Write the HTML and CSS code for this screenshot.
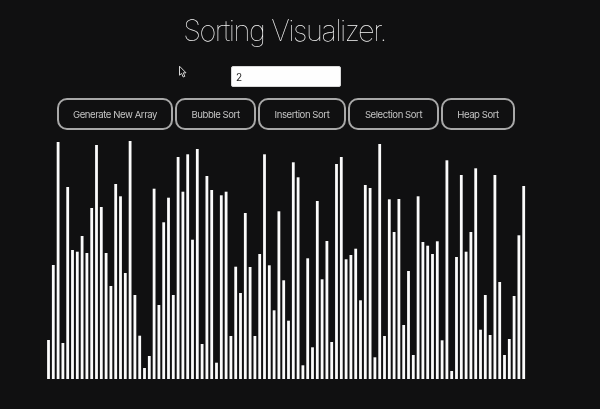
FILE: index.html
```html
<!DOCTYPE html>
<html lang="en">
<head>
<meta charset="utf-8">
<title>Sorting Visualizer</title>
<link rel="stylesheet" href="styles.css">
</head>
<body>
<header class="header">
  <h1 class="title">Sorting Visualizer.</h1>
  <input class="speed" type="text" value="2" aria-label="Speed">
</header>
<nav class="actions">
  <button class="btn btn-generate">Generate New Array</button>
  <button class="btn btn-bubble">Bubble Sort</button>
  <button class="btn btn-insertion">Insertion Sort</button>
  <button class="btn btn-selection">Selection Sort</button>
  <button class="btn btn-heap">Heap Sort</button>
</nav>
<svg class="chart" id="chart" width="480" height="240" viewBox="0 0 480 240"></svg>
<svg class="cursor" width="10" height="14" viewBox="0 0 10 14"><path d="M1.5 1.2V10.2L3.6 8.4L5.2 12L6.8 11.3L5.3 7.8H8Z"/></svg>
<script src="script.js"></script>
</body>
</html>
```
FILE: styles.css
```css
body {
  margin: 0;
  width: 600px;
  height: 409px;
  overflow: hidden;
  background: #101011;
  font-family: Inter, Roboto, "Liberation Sans", sans-serif;
}

.header {
  display: flex;
  flex-direction: column;
  align-items: center;
  width: 572px;
  padding-top: 13px;
  will-change: transform;
}

.title {
  margin: 0 3px 17px 0;
  font-size: 29px;
  line-height: 36px;
  font-weight: 100;
  letter-spacing: -1.45px;
  white-space: nowrap;
  color: #f4f4f4;
}

.speed {
  box-sizing: border-box;
  width: 110px;
  height: 21px;
  padding: 0 4px;
  border: 1px solid #d8d8d8;
  border-radius: 2px;
  background: #fefefe;
  color: #222;
  font: 10px Inter, sans-serif;
}

.actions {
  display: flex;
  gap: 2px;
  margin: 11px 0 0 57px;
  will-change: transform;
}

.btn {
  box-sizing: border-box;
  height: 32px;
  padding: 0;
  border: 2px solid #a8a8a8;
  border-radius: 10px;
  background: transparent;
  color: #c4c4c4;
  font: 9.6px Inter, sans-serif;
  letter-spacing: -0.45px;
  white-space: nowrap;
}

.btn-generate { width: 116px; }
.btn-bubble { width: 81px; }
.btn-insertion { width: 88px; }
.btn-selection { width: 91px; }
.btn-heap { width: 74px; }

.chart {
  display: block;
  margin: 9px 0 0 47px;
}

.bar { fill: #fbfbfb; }

.cursor {
  position: absolute;
  left: 178px;
  top: 65px;
  fill: #101011;
  stroke: #d5d5d5;
  stroke-width: 1;
}
```
FILE: script.js
```js
const values = [
  39, 114, 237, 36, 192, 129, 127.3, 143, 126, 171,
  234, 172, 126, 93, 195, 182.7, 106, 238, 84, 43.3,
  11, 23, 190.3, 74, 156.7, 181.3, 84, 222, 187.3, 224.7,
  139.3, 230, 35, 203, 189, 16.3, 183.7, 187.3, 43, 112.3,
  86, 166, 112, 43, 125, 224.7, 113.7, 68.7, 167.7, 98.7,
  58.3, 216.7, 201.7, 13.7, 120.7, 31.7, 178, 99.7, 138, 37,
  215, 222, 119.7, 124, 130.3, 78.7, 194, 191, 21.7, 235,
  43, 179.7, 147, 180, 54, 108, 24, 182.7, 137, 133.3,
  125, 137.7, 38.7, 218.7, 8, 122, 204, 127.3, 147, 210.7,
  49.3, 84, 44, 204, 97, 24, 40, 83, 143.7, 193
];
const chart = document.getElementById("chart");
values.forEach((value, i) => {
  const bar = document.createElementNS("http://www.w3.org/2000/svg", "rect");
  bar.setAttribute("class", "bar");
  bar.setAttribute("x", (0.1 + i * 4.8).toFixed(2));
  bar.setAttribute("y", 240 - value);
  bar.setAttribute("width", 2.8);
  bar.setAttribute("height", value);
  chart.appendChild(bar);
});
```
